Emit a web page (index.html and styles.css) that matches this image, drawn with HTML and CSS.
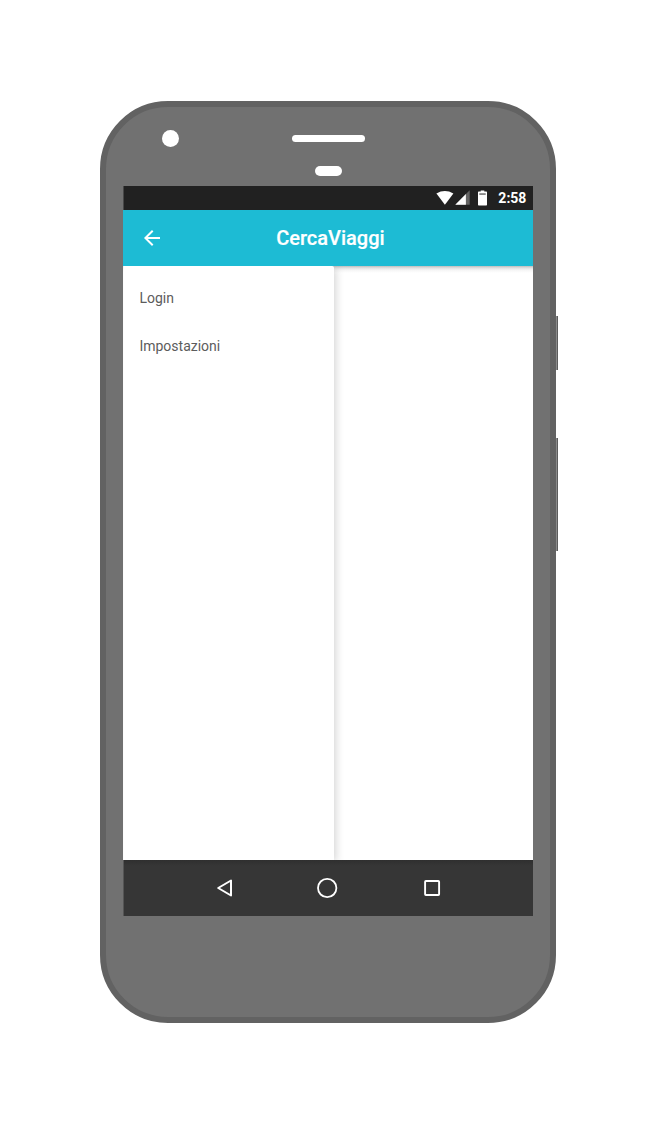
FILE: index.html
```html
<!DOCTYPE html>
<html lang="it">
<head>
<meta charset="utf-8">
<title>CercaViaggi</title>
<link rel="stylesheet" href="styles.css">
</head>
<body>
<div class="phone">
  <span class="side-button power"></span>
  <span class="side-button volume"></span>
  <div class="bezel">
    <span class="camera"></span>
    <div class="ear">
      <span class="speaker"></span>
      <span class="sensor"></span>
    </div>
  </div>
  <div class="screen">
    <div class="status-bar">
      <svg class="status-icons" width="54" height="24" viewBox="0 0 54 24" fill="#fff">
        <path d="M.4 7.5Q8.9 2.6 17.4 7.5L8.9 18.8Z"/>
        <path d="M33.7 4.3V18.7H19.3Z" opacity=".3"/>
        <path d="M29.9 8.1V18.7H19.3Z"/>
        <path d="M42 6.3Q42 5.6 42.7 5.6H44.7V4.4H48.3V5.6H50.3Q51 5.6 51 6.3V18.8Q51 19.5 50.3 19.5H42.7Q42 19.5 42 18.8Z"/>
        <path d="M43.3 7.4H49.7V8.7H43.3Z" fill="#555"/>
      </svg>
      <span class="clock">2:58</span>
    </div>
    <header class="app-bar">
      <svg class="back" width="24" height="24" viewBox="0 0 24 24" fill="#fff"><path d="M20 11H7.83l5.59-5.59L12 4l-8 8 8 8 1.41-1.41L7.83 13H20z"/></svg>
      <h1 class="title">CercaViaggi</h1>
    </header>
    <main class="content">
      <nav class="drawer">
        <a class="item">Login</a>
        <a class="item">Impostazioni</a>
      </nav>
    </main>
    <div class="nav-bar">
      <svg width="410" height="56" viewBox="0 0 410 56" fill="none" stroke="#fff" stroke-width="2">
        <path d="M95.2 28L108 20.5V35.5Z" stroke-linejoin="round"/>
        <circle cx="204.2" cy="28" r="9.2" stroke-width="1.8"/>
        <rect x="302.1" y="21" width="14" height="14" rx=".8" stroke-width="1.9"/>
      </svg>
    </div>
  </div>
</div>
</body>
</html>
```
FILE: styles.css
```css
* { box-sizing: border-box; }
body {
  margin: 0;
  height: 1123px;
  overflow: hidden;
  background: #fff;
  font-family: Roboto, sans-serif;
}
.phone {
  position: relative;
  width: 456px;
  height: 922px;
  margin: 101px 0 0 100.4px;
  border: 6px solid #626262;
  border-radius: 68px;
  background: #717171;
}
.side-button {
  position: absolute;
  right: -8px;
  width: 2px;
  background: linear-gradient(90deg, #8a8a8a 1px, #5c5c5c 1px);
}
.power { top: 209px; height: 54px; }
.volume { top: 331px; height: 113px; }
.bezel {
  display: grid;
  grid-template-columns: 1fr auto 1fr;
  height: 79px;
  padding-top: 23px;
}
.camera {
  width: 17.4px;
  height: 17.4px;
  margin-left: 55.5px;
  border-radius: 50%;
  background: #fff;
}
.ear {
  display: flex;
  flex-direction: column;
  align-items: center;
  gap: 24px;
  padding-top: 5px;
}
.speaker, .sensor { background: #fff; border-radius: 5px; }
.speaker { width: 73px; height: 7px; }
.sensor { width: 27px; height: 10px; }
.screen {
  display: flex;
  flex-direction: column;
  width: 410px;
  height: 730px;
  margin-left: 17px;
  background: #fff;
  overflow: hidden;
}
.status-bar {
  display: flex;
  justify-content: flex-end;
  align-items: center;
  gap: 8px;
  height: 24px;
  padding-right: 7px;
  border-left: 1px solid #484848;
  background: #212121;
  color: #fff;
}
.clock { font-size: 14px; font-weight: 700; line-height: 24px; }
.app-bar {
  display: grid;
  grid-template-columns: 56px 1fr 56px;
  align-items: center;
  height: 56px;
  background: #1dbbd4;
}
.back { margin-left: 16.6px; }
.title {
  margin: 0;
  padding-left: 4px;
  text-align: center;
  color: #fff;
  font-size: 20px;
  font-weight: 500;
  line-height: 28px;
  -webkit-text-stroke: .2px #fff;
}
.content {
  flex: 1;
  clip-path: inset(0);
  background: linear-gradient(#bdbdbd, #e2e2e2 2px, #f5f5f5 4px, #fff 7px);
}
.drawer {
  display: flex;
  flex-direction: column;
  width: 211px;
  height: 100%;
  padding: 8px 0;
  border-top-right-radius: 2px;
  background: #fff;
  box-shadow: 2px 2px 9px rgba(0, 0, 0, .17);
}
.item {
  height: 48px;
  padding-left: 16px;
  color: #5c5c5c;
  font-size: 14px;
  line-height: 48px;
}
.nav-bar {
  height: 56px;
  background: linear-gradient(90deg, #555 1px, transparent 1px), linear-gradient(#2f2f2f, #363636 6px);
}
.nav-bar svg { display: block; }
```
